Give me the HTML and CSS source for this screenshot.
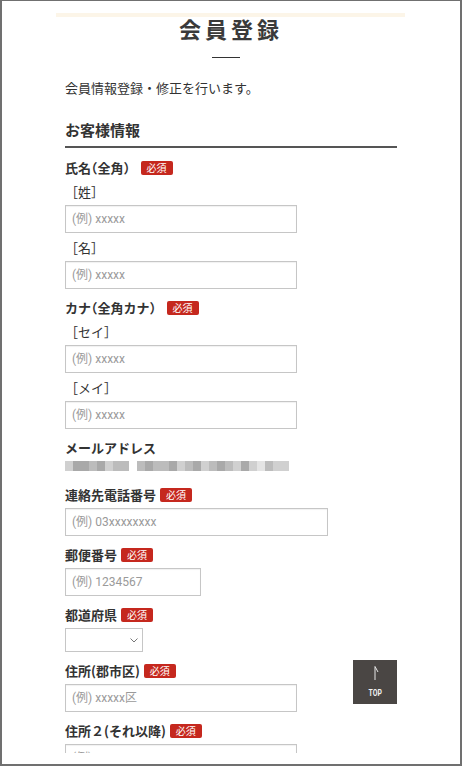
FILE: index.html
```html
<!DOCTYPE html>
<html lang="ja">
<head>
<meta charset="utf-8">
<title>会員登録</title>
<link rel="stylesheet" href="styles.css">
</head>
<body>
<div class="frame">
  <div class="screen">
    <div class="topbar"></div>
    <h1 class="title">会員登録</h1>
    <div class="title-rule"></div>
    <main class="content">
      <p class="lead">会員情報登録・修正を行います。</p>
      <h2 class="section">お客様情報</h2>

      <div class="label"><span>氏名<span class="op">（</span>全角）</span><span class="badge">必須</span></div>
      <div class="sub">［姓］</div>
      <input class="inp" type="text" placeholder="(例) xxxxx">
      <div class="sub">［名］</div>
      <input class="inp" type="text" placeholder="(例) xxxxx">

      <div class="label"><span>カナ<span class="op">（</span>全角カナ）</span><span class="badge">必須</span></div>
      <div class="sub">［セイ］</div>
      <input class="inp" type="text" placeholder="(例) xxxxx">
      <div class="sub">［メイ］</div>
      <input class="inp" type="text" placeholder="(例) xxxxx">

      <div class="label">メールアドレス</div>
      <div class="masked" aria-label="メールアドレス（非表示）">
        <span class="g3"></span><span class="g1"></span><span class="g1"></span><span class="g2"></span><span class="g1"></span><span class="g3"></span><span class="g2"></span><span class="g2"></span><span class="g0"></span><span class="g2"></span><span class="g1"></span><span class="g2"></span><span class="g2"></span><span class="g1"></span><span class="g3"></span><span class="g2"></span><span class="g1"></span><span class="g3"></span><span class="g2"></span><span class="g1"></span><span class="g2"></span><span class="g3"></span><span class="g1"></span><span class="g3"></span><span class="g4"></span><span class="g2"></span><span class="g3"></span><span class="g3"></span>
      </div>

      <div class="label">連絡先電話番号<span class="badge">必須</span></div>
      <input class="inp wide" type="text" placeholder="(例) 03xxxxxxxx">

      <div class="label">郵便番号<span class="badge">必須</span></div>
      <input class="inp short" type="text" placeholder="(例) 1234567">

      <div class="label">都道府県<span class="badge">必須</span></div>
      <div class="select">
        <svg class="chev" width="8" height="5" viewBox="0 0 8 5"><path d="M0.5 0.5 L4 4 L7.5 0.5" fill="none" stroke="#777" stroke-width="1"/></svg>
      </div>

      <div class="label">住所(郡市区)<span class="badge">必須</span></div>
      <input class="inp" type="text" placeholder="(例) xxxxx区">

      <div class="label">住所２(それ以降)<span class="badge">必須</span></div>
      <input class="inp" type="text" placeholder="(例) xxxxx">
    </main>

    <a class="totop" href="#">
      <svg class="arrow" width="8" height="14" viewBox="0 0 8 14"><path d="M4 14 L4 0.5 L7 6" fill="none" stroke="#e6e6e6" stroke-width="1"/></svg>
      <span class="totop-text">TOP</span>
    </a>
  </div>
</div>
</body>
</html>
```

FILE: styles.css
```css
* {
  box-sizing: border-box;
}

body {
  margin: 0;
  background: #fff;
  font-family: "Noto Sans CJK JP", "Noto Sans", sans-serif;
  color: #333;
}

.frame {
  width: 462px;
  height: 766px;
  border: 2px solid #707070;
  border-top-width: 1px;
  padding-bottom: 11px;
  background: #fff;
}

.screen {
  position: relative;
  height: 752px;
  overflow: hidden;
}

.topbar {
  height: 4px;
  margin: 12px 55px 0 54px;
  background: #fcf5e8;
}

.title {
  margin: 0;
  font-size: 22px;
  line-height: 22px;
  font-weight: 700;
  letter-spacing: 4px;
  text-align: center;
  color: #3a3a3a;
}

.title-rule {
  width: 28px;
  height: 1px;
  background: #333;
  margin: 18px 0 0 210px;
}

.content {
  width: 332px;
  margin: 0 auto;
}

.lead {
  margin: 20px 0 0;
  font-size: 13px;
  line-height: 20px;
}

.section {
  margin: 21px 0 0;
  font-size: 15px;
  line-height: 22px;
  font-weight: 700;
  padding-bottom: 5px;
  border-bottom: 2px solid #555;
  color: #333;
}

.label {
  display: flex;
  align-items: center;
  gap: 4px;
  height: 20px;
  margin-top: 9px;
  font-size: 13px;
  line-height: 20px;
  font-weight: 700;
  color: #333;
}

.op {
  font-feature-settings: "halt" 1;
}

.section + .label {
  margin-top: 10px;
}

.badge {
  display: inline-block;
  height: 14px;
  line-height: 14px;
  padding: 0 6px;
  font-size: 10px;
  font-weight: 400;
  color: #fff;
  background: #c5281e;
  border-radius: 2px;
}

.sub {
  margin-top: 5px;
  font-size: 13px;
  line-height: 20px;
  color: #333;
}

.label + .sub {
  margin-top: 4px;
}

.inp {
  display: block;
  width: 232px;
  height: 28px;
  margin: 3px 0 0;
  padding: 0 6px;
  border: 1px solid #c6c6c6;
  border-radius: 0;
  box-shadow: inset 0 1px 1px rgba(0, 0, 0, 0.06);
  background: #fff;
  font-family: Roboto, "Noto Sans CJK JP", sans-serif;
  font-size: 12px;
  color: #333;
  outline: none;
}

.inp::placeholder {
  color: #9a9a9a;
}

.inp.wide {
  width: 263px;
}

.inp.short {
  width: 136px;
}

.masked {
  display: flex;
  height: 15px;
  padding-top: 3px;
}

.masked span {
  width: 8px;
  height: 10px;
}

.masked .g0 { background: #fff; }
.masked .g1 { background: #a9a9a9; }
.masked .g2 { background: #bcbcbc; }
.masked .g3 { background: #d0d0d0; }
.masked .g4 { background: #e4e4e4; }

.masked + .label {
  margin-top: 12px;
}

.select {
  display: flex;
  align-items: center;
  justify-content: flex-end;
  width: 78px;
  height: 24px;
  margin-top: 3px;
  padding-right: 4px;
  border: 1px solid #c6c6c6;
  background: #fff;
}

.totop {
  position: absolute;
  left: 351px;
  top: 659px;
  width: 44px;
  height: 44px;
  display: flex;
  flex-direction: column;
  align-items: center;
  padding-top: 6px;
  background: #4a4644;
  text-decoration: none;
}

.arrow {
  display: block;
}

.totop-text {
  display: inline-block;
  margin-top: 8px;
  font-family: Roboto, sans-serif;
  font-size: 9.5px;
  line-height: 10px;
  font-weight: 700;
  color: #f2f2f2;
  transform: scaleX(0.72);
}
```
